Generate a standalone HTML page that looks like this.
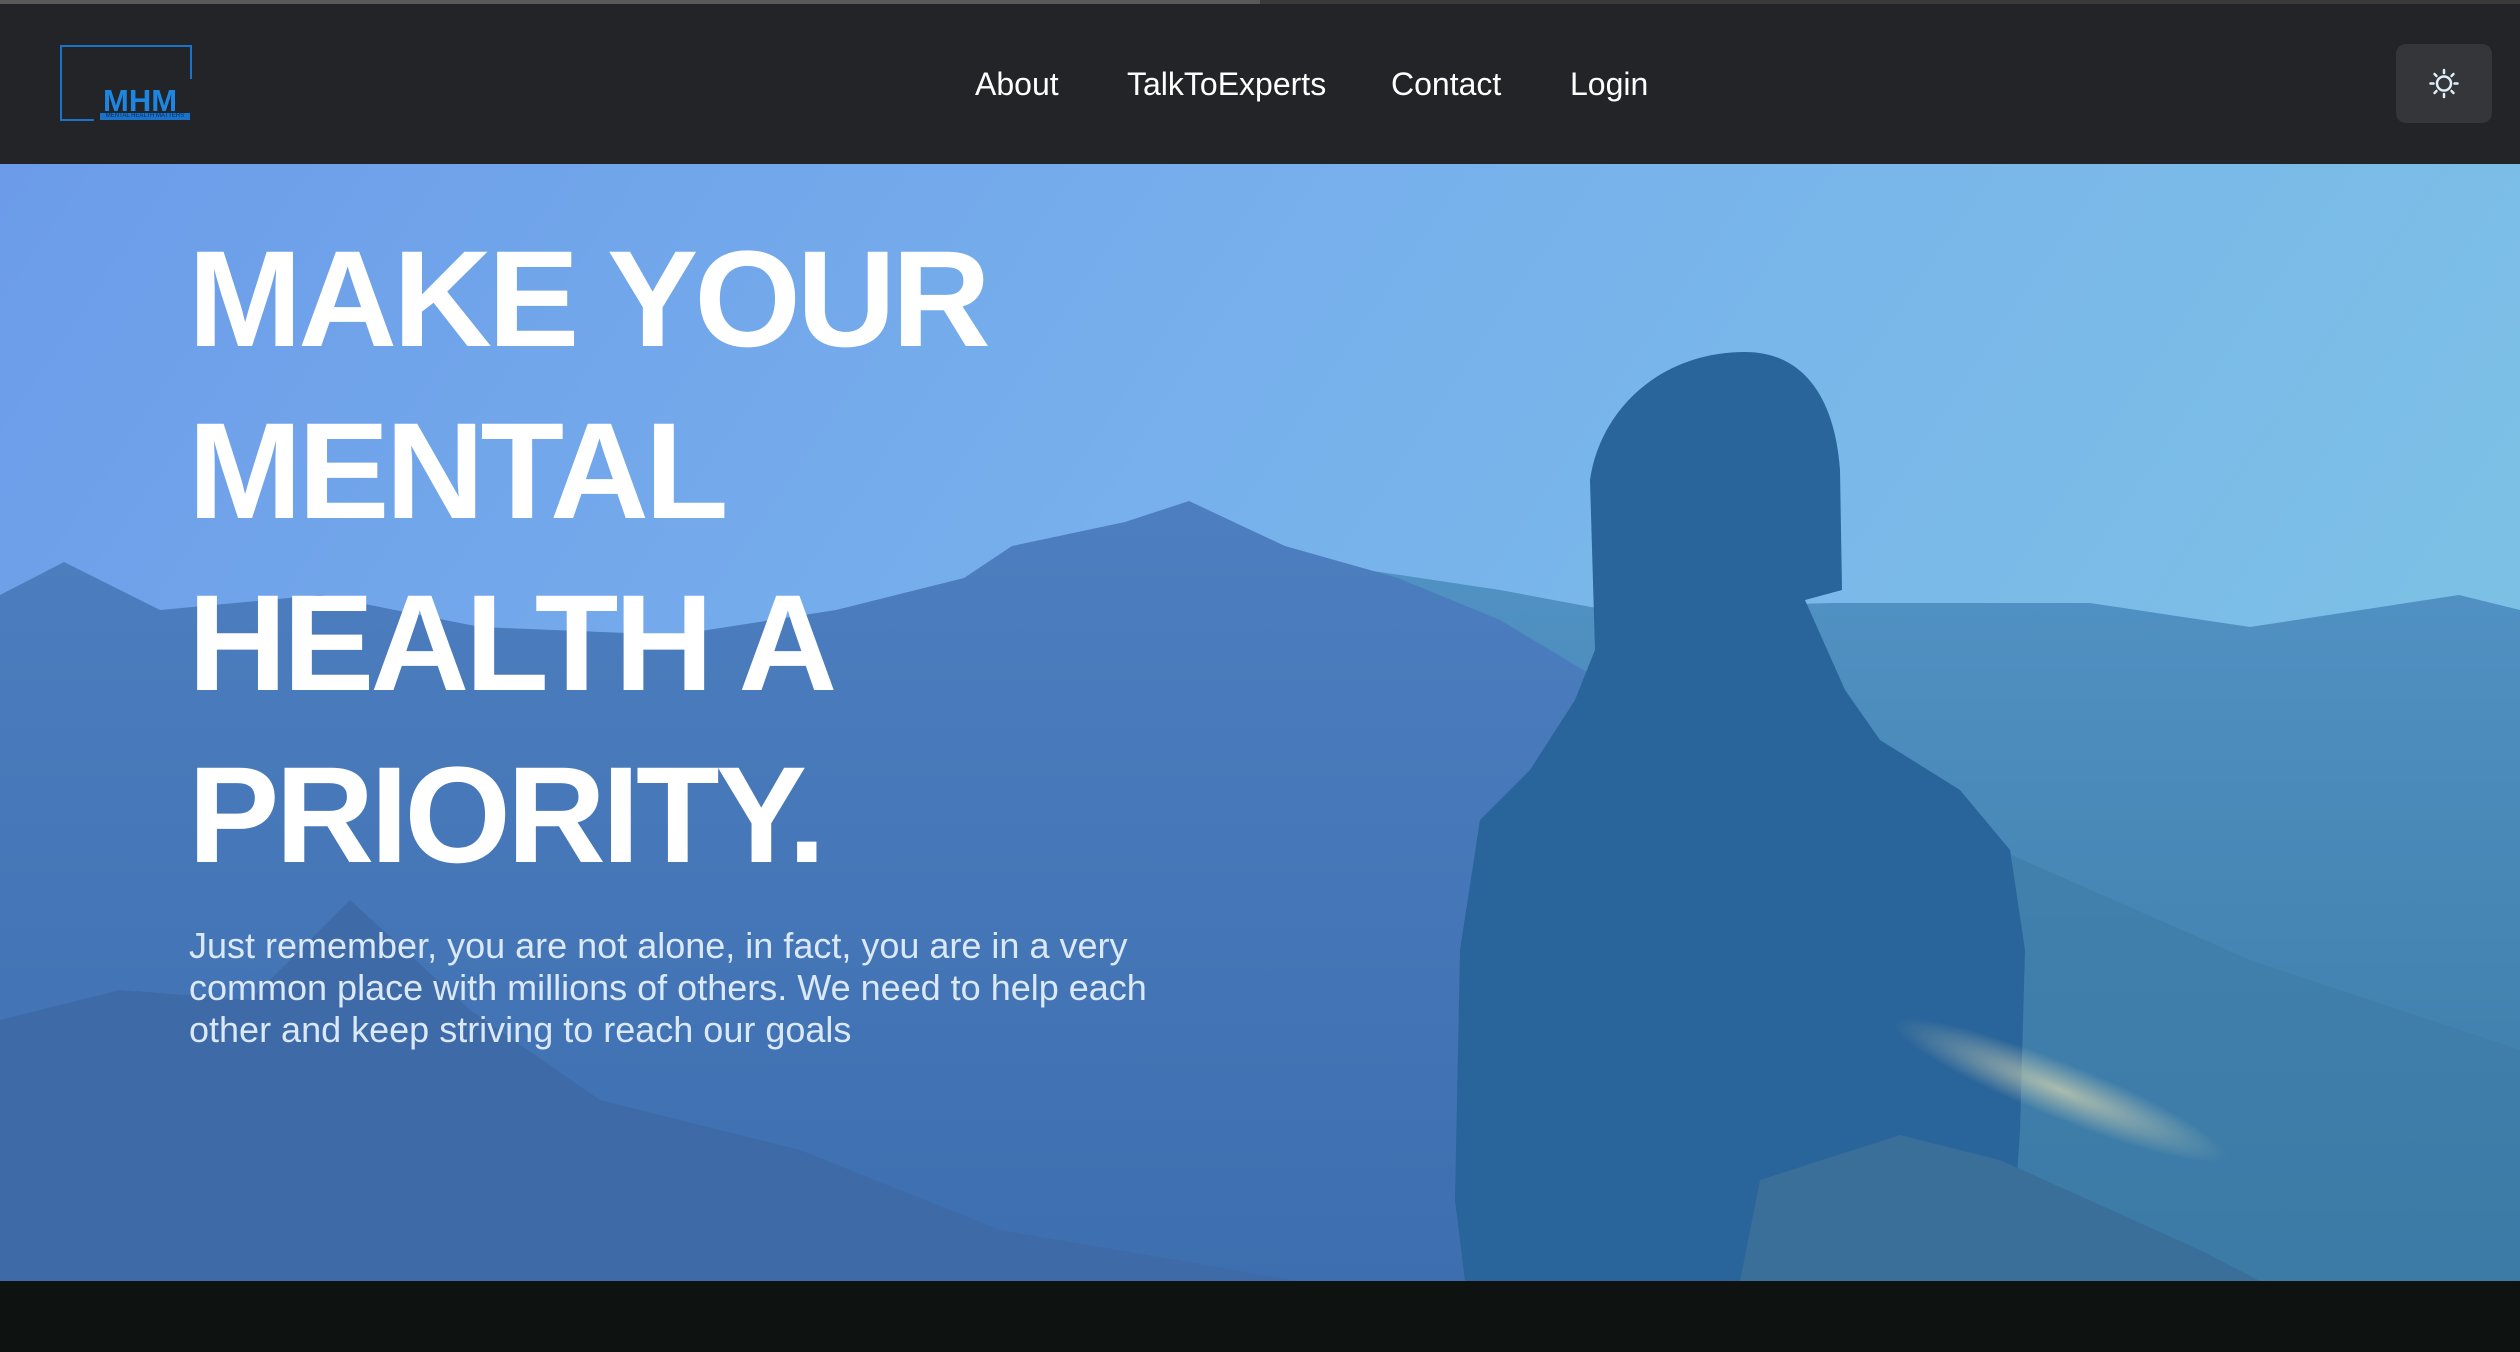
<!DOCTYPE html>
<html><head><meta charset="utf-8"><style>
html,body{margin:0;padding:0;width:2520px;height:1352px;overflow:hidden;background:#0e1210;font-family:"Liberation Sans",sans-serif}
.nav{position:absolute;left:0;top:0;width:2520px;height:164px;background:#232427}
.topbar{position:absolute;left:0;top:0;width:1260px;height:4px;background:#5a5a5a}
.topbar2{position:absolute;left:1260px;top:0;width:1260px;height:4px;background:#3a3a3a}
.logo{position:absolute;left:60px;top:45px;width:130px;height:76px;border:2px solid #1a73c8;border-bottom:none;border-right:none;box-sizing:border-box}
.logo .r{position:absolute;right:-2px;top:-2px;width:2px;height:34px;background:#1a73c8}
.logo .b{position:absolute;left:-2px;bottom:0;width:34px;height:2px;background:#1a73c8}
.mhm{position:absolute;left:103px;top:83px;font-size:31px;font-weight:bold;color:#1d86e0}
.tag{position:absolute;left:100px;top:113px;width:90px;height:7px;background:#1a73c8;font-size:6px;line-height:7px;color:#0b2b55;text-align:center}
.links a{position:absolute;top:66px;font-size:32px;color:#fff;text-decoration:none}
.btn{position:absolute;left:2396px;top:44px;width:96px;height:79px;background:#343639;border-radius:10px}
.hero{position:absolute;left:0;top:164px;width:2520px;height:1117px;overflow:hidden}
h1{position:absolute;left:188px;margin:0;font-size:137px;line-height:172px;color:#fff;font-weight:bold;letter-spacing:-4px}
p{position:absolute;left:189px;margin:0;width:1000px;font-size:36px;line-height:42px;color:#dbe8f6}
</style></head><body>
<div class="hero">
<svg width="2520" height="1117" viewBox="0 164 2520 1117" style="position:absolute;left:0;top:0">
<defs>
<linearGradient id="sky" x1="0" y1="0" x2="1" y2="0.3"><stop offset="0" stop-color="#6c9ce9"/><stop offset="0.5" stop-color="#77b0ec"/><stop offset="1" stop-color="#7cc0e6"/></linearGradient>
<linearGradient id="mt" x1="0" y1="0" x2="0" y2="1"><stop offset="0" stop-color="#4d7fc0"/><stop offset="1" stop-color="#3d6fb0"/></linearGradient>
<linearGradient id="mt2" x1="0" y1="0" x2="0" y2="1"><stop offset="0" stop-color="#5192c4"/><stop offset="1" stop-color="#3a7aa5"/></linearGradient>
<radialGradient id="flare" cx="0.5" cy="0.5" r="0.5"><stop offset="0" stop-color="#d8d6b0" stop-opacity="0.7"/><stop offset="1" stop-color="#d8d6b0" stop-opacity="0"/></radialGradient>
</defs>
<rect x="0" y="164" width="2520" height="1117" fill="url(#sky)"/>
<path d="M1300 560 L1500 590 L1607 610 L1832 603 L2090 603 L2250 627 L2459 595 L2520 610 L2520 1281 L1300 1281 Z" fill="url(#mt2)"/>
<path d="M1400 640 L1600 700 L1800 760 L2000 850 L2250 960 L2520 1050 L2520 1281 L1400 1281 Z" fill="#3d7ca6" opacity="0.6"/>
<path d="M0 595 L64 562 L160 610 L320 595 L480 627 L675 635 L836 610 L964 578 L1012 546 L1125 522 L1189 501 L1285 546 L1398 578 L1500 620 L1600 680 L1650 1281 L0 1281 Z" fill="url(#mt)"/>
<path d="M0 1020 L120 990 L250 1000 L350 900 L470 1010 L600 1100 L800 1150 L1000 1230 L1300 1281 L0 1281 Z" fill="#3e6aa8"/>
<path d="M1745 352 C1805 352 1835 400 1840 470 L1842 590 L1805 600 L1845 690 L1880 740 L1960 790 L2010 850 L2025 950 L2020 1130 L2010 1281 L1465 1281 L1455 1200 L1460 950 L1480 820 L1530 770 L1575 700 L1595 650 L1590 480 C1600 410 1660 352 1745 352 Z" fill="#29649a"/>
<path d="M1760 1180 L1900 1135 L2000 1160 L2200 1250 L2260 1281 L1740 1281 Z" fill="#3a6f9a"/>
<ellipse cx="2060" cy="1090" rx="180" ry="28" transform="rotate(22 2060 1090)" fill="url(#flare)"/>
</svg>
<h1 style="top:50px">MAKE YOUR<br>MENTAL<br>HEALTH A<br>PRIORITY.</h1>
<p style="top:761px">Just remember, you are not alone, in fact, you are in a very common place with millions of others. We need to help each other and keep striving to reach our goals</p>
</div>
<div class="nav">
<div class="topbar"></div><div class="topbar2"></div>
<div class="logo"><div class="r"></div><div class="b"></div></div>
<div class="mhm">MHM</div>
<div class="tag">MENTAL HEALTH MATTERS</div>
<div class="links"><a style="left:975px">About</a><a style="left:1127px">TalkToExperts</a><a style="left:1391px">Contact</a><a style="left:1570px">Login</a></div>
<div class="btn"><svg width="96" height="79" viewBox="0 0 96 79"><g stroke="#dfeefa" stroke-width="2.5" fill="none" stroke-linecap="round"><circle cx="48" cy="39.5" r="7"/><path d="M48 26v3M48 50v3M34.5 39.5h3M58.5 39.5h3M38.5 30l2 2M55.5 47l2 2M38.5 49l2-2M55.5 32l2-2"/></g></svg></div>
</div>
</body></html>
